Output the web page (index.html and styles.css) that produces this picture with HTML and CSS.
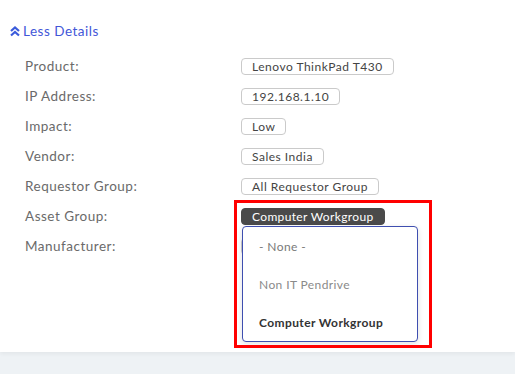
FILE: index.html
```html
<!DOCTYPE html>
<html lang="en">
<head>
    <meta charset="UTF-8">
    <title>Asset Details</title>
    <link rel="stylesheet" href="styles.css">
</head>
<body>
    <div class="card">
        <a class="toggle" href="#">
            <svg class="toggle-icon" width="10" height="11" viewBox="0 0 10 11">
                <path d="M1 5 L5 1.5 L9 5 M1 9.5 L5 6 L9 9.5" fill="none" stroke="#3b5bdb" stroke-width="2.2"/>
            </svg>
            Less Details
        </a>

        <div class="details">
            <div class="label">Product:</div>
            <div class="value"><span class="pill">Lenovo ThinkPad T430</span></div>

            <div class="label">IP Address:</div>
            <div class="value"><span class="pill">192.168.1.10</span></div>

            <div class="label">Impact:</div>
            <div class="value"><span class="pill">Low</span></div>

            <div class="label">Vendor:</div>
            <div class="value"><span class="pill">Sales India</span></div>

            <div class="label">Requestor Group:</div>
            <div class="value"><span class="pill">All Requestor Group</span></div>

            <div class="label">Asset Group:</div>
            <div class="value anchor">
                <span class="pill active">Computer Workgroup</span>
                <div class="highlight"></div>
                <ul class="dropdown">
                    <li class="muted">- None -</li>
                    <li>Non IT Pendrive</li>
                    <li class="selected">Computer Workgroup</li>
                </ul>
            </div>

            <div class="label">Manufacturer:</div>
            <div class="value"><span class="pill placeholder"></span></div>
        </div>
    </div>
</body>
</html>
```

FILE: styles.css
```css
* {
    margin: 0;
    padding: 0;
    box-sizing: border-box;
}

body {
    font-family: Lato, "Open Sans", sans-serif;
    background: #eef2f5;
    width: 515px;
    height: 374px;
    overflow: hidden;
}

.card {
    background: #fff;
    height: 352px;
    padding-top: 20px;
    box-shadow: 0 2px 4px rgba(0, 0, 0, 0.05);
}

.toggle {
    display: flex;
    align-items: center;
    gap: 3px;
    height: 22px;
    padding-left: 10px;
    color: #4256d8;
    font-size: 13.5px;
    letter-spacing: 0.5px;
    text-decoration: none;
}

.toggle-icon {
    margin-top: 1px;
}

.details {
    display: grid;
    grid-template-columns: 216px auto;
    grid-auto-rows: 30px;
    margin-top: 9px;
    padding-left: 25px;
}

.label {
    display: flex;
    align-items: center;
    font-size: 13.5px;
    letter-spacing: 0.5px;
    color: #6a6a6a;
}

.value {
    display: flex;
    align-items: center;
}

.pill {
    display: inline-flex;
    align-items: center;
    height: 17px;
    padding: 0 10px;
    border: 1px solid #cacaca;
    border-radius: 4px;
    font-size: 12px;
    letter-spacing: 0.5px;
    color: #444;
}

.pill.placeholder {
    width: 60px;
}

.pill.active {
    background: #4a4a4a;
    border-color: #4a4a4a;
    color: #fff;
    letter-spacing: 0.35px;
}

.anchor {
    position: relative;
}

.highlight {
    position: absolute;
    left: -7px;
    top: -1px;
    width: 198px;
    height: 148px;
    border: 3px solid #ff0000;
    z-index: 2;
}

.dropdown {
    position: absolute;
    left: 1px;
    top: 25px;
    width: 176px;
    list-style: none;
    background: #fff;
    border: 1px solid #3f4fb0;
    border-radius: 4px;
    box-shadow: 0 2px 6px rgba(0, 0, 0, 0.12);
    z-index: 1;
}

.dropdown li {
    height: 38px;
    display: flex;
    align-items: center;
    padding-left: 16px;
    font-size: 12px;
    letter-spacing: 0.4px;
    color: #8a8a8a;
}

.dropdown li.muted {
    color: #7a7a7a;
}

.dropdown li.selected {
    font-weight: bold;
    color: #333;
}
```
